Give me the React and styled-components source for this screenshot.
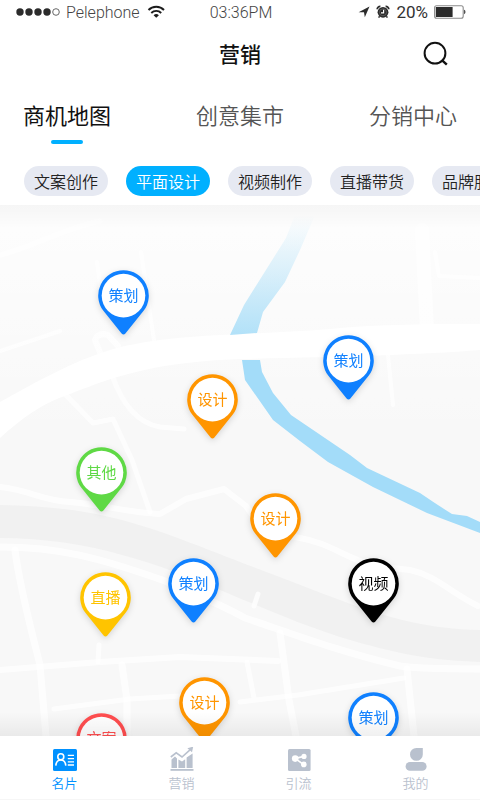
import React, { useState } from "react";
import styled, { createGlobalStyle } from "styled-components";

const GlobalStyle = createGlobalStyle`
  * {
    box-sizing: border-box;
  }

  body {
    margin: 0;
    background: #ffffff;
    font-family: "Noto Sans CJK SC", "Noto Sans", sans-serif;
    color: #222222;
  }

  button {
    border: none;
    padding: 0;
    background: none;
    font-family: inherit;
    color: inherit;
    cursor: pointer;
  }
`;

const Page = styled.div`
  display: flex;
  flex-direction: column;
  height: 100vh;
  overflow: hidden;
`;

// Top area
const Header = styled.header`
  background: #ffffff;
  padding-bottom: 9px;
`;

const StatusBar = styled.div`
  display: grid;
  grid-template-columns: 1fr auto 1fr;
  align-items: center;
  height: 24px;
  padding: 0 14px 0 16px;
  font-family: Roboto, sans-serif;
  font-size: 16px;
  font-weight: 300;
  color: #444444;
`;

const StatusGroup = styled.div`
  display: flex;
  align-items: center;
  justify-content: ${(props) => (props.$end ? "flex-end" : "flex-start")};
  gap: ${(props) => (props.$end ? "6px" : "5px")};
`;

const Battery = styled.span`
  font-size: 17px;
  font-weight: 400;
  color: #333333;
`;

const TitleBar = styled.div`
  display: grid;
  grid-template-columns: 1fr auto 1fr;
  align-items: center;
  height: 60px;
  padding: 0 31px;
`;

const Title = styled.h1`
  grid-column: 2;
  margin: 0 0 2px;
  font-size: 21px;
  line-height: 32px;
  font-weight: 500;
  color: #111111;
`;

const SearchButton = styled.button`
  justify-self: end;
  display: flex;
`;

const Tabs = styled.nav`
  display: flex;
  justify-content: space-between;
  padding: 14px 23px 22px;
`;

const Tab = styled.button`
  display: flex;
  flex-direction: column;
  align-items: center;
  gap: 10px;
  font-size: 22px;
  line-height: 32px;
  font-weight: ${(props) => (props.$active ? 400 : 350)};
  color: ${(props) => (props.$active ? "#111111" : "#555555")};

  &:after {
    content: "";
    width: 32px;
    height: 4px;
    border-radius: 2px;
    background: ${(props) => (props.$active ? "#00b0ff" : "transparent")};
  }
`;

const Chips = styled.div`
  display: flex;
  gap: 18px;
  padding: 0 24px;
  overflow: hidden;
`;

const Chip = styled.button`
  flex: none;
  height: 30px;
  border-radius: 15px;
  font-size: 16px;
  line-height: 30px;
  font-weight: 350;

  && {
    padding: 0 10px;
    background: ${(props) => (props.$active ? "#00b0ff" : "#e6e9f2")};
    color: ${(props) => (props.$active ? "#ffffff" : "#222222")};
  }
`;

// Map
const Map = styled.main`
  position: relative;
  flex: 1;
  min-height: 0;
  overflow: hidden;
  background: #f9f9f9;
`;

const MapArt = styled.svg`
  display: block;
  width: 100%;
  height: 100%;
`;

const Shade = styled.div`
  position: absolute;
  left: 0;
  right: 0;
  height: 24px;
  pointer-events: none;
  ${(props) =>
    props.$bottom
      ? "bottom: 0; background: linear-gradient(0deg, rgba(0, 0, 0, 0.06), rgba(0, 0, 0, 0));"
      : "top: 0; background: linear-gradient(180deg, rgba(0, 0, 0, 0.03), rgba(0, 0, 0, 0));"}
`;

const Pin = styled.button`
  position: absolute;
  left: ${(props) => props.$x}px;
  top: ${(props) => props.$y}px;
  width: 51px;
  height: 66px;
  filter: drop-shadow(0 2px 3px rgba(0, 0, 0, 0.14));

  svg {
    display: block;
  }
`;

const PinLabel = styled.span`
  position: absolute;
  top: 14px;
  left: 0;
  width: 100%;
  text-align: center;
  font-size: 15px;
  line-height: 22px;
  font-weight: 400;
  color: ${(props) => props.$color};
`;

// Bottom navigation
const BottomNav = styled.nav`
  display: flex;
  height: 64px;
  padding: 0 6px;
  background: #ffffff;
  border-bottom: 1px solid #f6f6f6;
`;

const NavItem = styled.a`
  flex: 1;
  display: flex;
  flex-direction: column;
  align-items: center;
  padding-top: 11px;
  font-size: 13px;
  line-height: 20px;
  font-weight: 350;
  text-decoration: none;
  color: ${(props) => (props.$active ? "#0091ff" : "#b9c1ce")};
`;

const tabs = ["商机地图", "创意集市", "分销中心"];

const chips = ["文案创作", "平面设计", "视频制作", "直播带货", "品牌服务"];

const colors = {
  策划: "#0f80ff",
  设计: "#ff9500",
  其他: "#5fd945",
  直播: "#ffc400",
  视频: "#000000",
  文案: "#ff4d4f",
};

const pins = [
  { type: "策划", x: 98, y: 65 },
  { type: "策划", x: 323, y: 130 },
  { type: "设计", x: 187, y: 169 },
  { type: "其他", x: 76, y: 242 },
  { type: "设计", x: 250, y: 288 },
  { type: "直播", x: 80, y: 367 },
  { type: "策划", x: 168, y: 353 },
  { type: "视频", x: 348, y: 353 },
  { type: "设计", x: 179, y: 472 },
  { type: "文案", x: 76, y: 508 },
  { type: "策划", x: 348, y: 487 },
];

function SignalDots() {
  return (
    <svg width="45" height="10" viewBox="0 0 45 10">
      {[4, 13, 22, 31].map((x) => (
        <circle key={x} cx={x} cy="5" r="3.7" fill="#2b2b2b" />
      ))}
      <circle cx="40" cy="5" r="3.3" fill="none" stroke="#555" strokeWidth="0.9" />
    </svg>
  );
}

function WifiIcon() {
  return (
    <svg width="22" height="14" viewBox="-3 0 22 14" fill="none" stroke="#1c1c1c" strokeWidth="1.9">
      <path d="M0.5 5C4.5 0.7 12 0.7 16 5" />
      <path d="M3.3 8C6 5.2 10.5 5.2 13.2 8" />
      <path d="M5.6 10.2C7.4 8.6 9.1 8.6 10.9 10.2L8.25 12.8Z" fill="#1c1c1c" stroke="none" />
    </svg>
  );
}

function LocationIcon() {
  return (
    <svg width="12" height="12" viewBox="0 0 12 12">
      <path d="M11.5 0.5L6.8 11.3L6 6.2L0.6 6.2Z" fill="#2b2b2b" />
    </svg>
  );
}

function AlarmIcon() {
  return (
    <svg width="14" height="14" viewBox="0 0 14 14">
      <circle cx="7" cy="7.3" r="5.4" fill="#2b2b2b" />
      <path d="M1.2 4.2A3 3 0 0 1 4.4 1.4M12.8 4.2A3 3 0 0 0 9.6 1.4" stroke="#2b2b2b" strokeWidth="1.8" fill="none" />
      <path d="M3.6 11.3L2.6 12.6M10.4 11.3L11.4 12.6" stroke="#2b2b2b" strokeWidth="1.5" />
      <circle cx="7" cy="7.3" r="3.5" fill="none" stroke="#777" strokeWidth="0.6" />
      <path d="M7.6 4.8V7.8H5" stroke="#fff" strokeWidth="1.2" fill="none" />
    </svg>
  );
}

function BatteryIcon() {
  return (
    <svg width="32" height="14" viewBox="0 0 32 14">
      <rect x="0.6" y="0.8" width="28.6" height="12.4" rx="2" fill="#fff" stroke="#8a8a8a" strokeWidth="1.1" />
      <rect x="1.8" y="2" width="16.8" height="10" fill="#2b2b2b" />
      <path d="M30.2 4.8C31.8 5.4 31.8 8.6 30.2 9.2Z" fill="#2b2b2b" />
    </svg>
  );
}

function SearchIcon() {
  return (
    <svg width="26" height="26" viewBox="0 0 26 26" fill="none" stroke="#111" strokeWidth="2">
      <circle cx="12" cy="12.2" r="10.4" />
      <path d="M18.6 18.8L23.8 23.6" strokeWidth="2.4" />
    </svg>
  );
}

function PinShape({ color }) {
  return (
    <svg width="51" height="66" viewBox="0 0 51 66">
      <path
        d="M25.5 0.2A25.3 25.3 0 0 0 5.2 40.6L23.6 63.6Q25.5 65.4 27.4 63.6L45.8 40.6A25.3 25.3 0 0 0 25.5 0.2Z"
        fill={color}
      />
      <circle cx="25.5" cy="25.6" r="21.8" fill="#fff" />
    </svg>
  );
}

function MapBackground() {
  return (
    <MapArt viewBox="0 205 480 531" preserveAspectRatio="xMidYMid slice" aria-hidden="true">
      <defs>
        <linearGradient id="river" gradientUnits="userSpaceOnUse" x1="0" y1="215" x2="0" y2="335">
          <stop offset="0" stopColor="#a0dbf8" stopOpacity="0" />
          <stop offset="0.45" stopColor="#a0dbf8" stopOpacity="0.35" />
          <stop offset="1" stopColor="#a0dbf8" stopOpacity="0.8" />
        </linearGradient>
        <linearGradient id="haze" gradientUnits="userSpaceOnUse" x1="0" y1="205" x2="0" y2="440">
          <stop offset="0" stopColor="#fff" stopOpacity="0.8" />
          <stop offset="1" stopColor="#fff" stopOpacity="0" />
        </linearGradient>
      </defs>
      <rect x="0" y="205" width="480" height="531" fill="#f8f8f8" />

      {/* railway band */}
      <path
        d="M0 505C60 506 110 512 183 540C215 552 260 570 340 600C390 619 430 629 480 630V662C430 660 400 655 340 637C300 624 270 611 220 590C160 565 90 538 0 538Z"
        fill="#f1f1f1"
      />

      {/* small streets */}
      <g fill="none" stroke="#fff" strokeOpacity="0.75" strokeLinecap="round" strokeLinejoin="round">
        <path strokeWidth="5" d="M0 255C30 248 60 230 100 221" />
        <path strokeWidth="4" d="M97 262L102 300M141 252L154 340M0 351L60 331" />
        <path strokeWidth="6" d="M101 355L95 340Q98 332 108 335L118 346" />
        <path strokeWidth="5" d="M66 395L93 423L113 419L132 460L150 512" />
        <path strokeWidth="5" d="M112 375C122 404 137 423 160 427L184 429" />
        <path strokeWidth="14" d="M422 230L427 330" />
        <path strokeWidth="4" d="M435 252L439 276L480 278M388 355L393 405" />
        <path
          strokeWidth="6"
          d="M0 487C30 490 40 500 70 502C100 504 130 513 160 514L186 499L224 489L246 506C260 530 280 535 300 538C330 543 345 558 375 566L410 570C435 575 450 592 478 606"
        />
        <path
          strokeWidth="7"
          d="M0 547C60 547 100 558 165 581C200 596 220 604 245 618C290 633 340 652 400 666C430 670 450 668 480 669"
        />
        <path strokeWidth="7" d="M15 550C20 590 34 640 40 665L46 736" />
        <path strokeWidth="6" d="M0 670L100 662L180 657L278 661" />
        <path strokeWidth="5" d="M99 645L98 662M54 709L130 699L180 696" />
        <path strokeWidth="7" d="M122 665L127 700V736" />
        <path strokeWidth="7" d="M280 633L289 700L296 736M407 669L414 736" />
        <path strokeWidth="5" d="M247 662L254 698M240 702L298 695L404 678M258 594L254 606" />
      </g>

      {/* main road */}
      <path
        d="M0 402C35 383 70 362 110 350C170 333 240 336 330 329C380 324 430 324 480 324V350C420 355 330 357 240 359C160 362 120 374 70 394C40 404 20 420 0 438Z"
        fill="#fff"
      />
      <rect x="0" y="205" width="480" height="235" fill="url(#haze)" />

      {/* river */}
      <path d="M295 215L286 238L244 305L230 335L257 333L263 312L285 282L300 250L315 215Z" fill="url(#river)" />
      <path
        d="M242 360H260L262 372L273 393L291 415L350 455L367 468L420 493Q436 504 452 514L467 516L480 522V533L427 513L373 487L328 462L300 441L273 420L245 380Z"
        fill="#a3dcf9"
      />
    </MapArt>
  );
}

function CardIcon() {
  return (
    <svg width="26" height="26" viewBox="0 0 26 26">
      <rect x="1" y="2" width="24" height="22" rx="1.5" fill="#0091ff" />
      <g fill="none" stroke="#fff" strokeWidth="1.6">
        <circle cx="8.8" cy="9.8" r="3" />
        <path d="M3.8 18.6C4.2 14.6 6 13 8.8 13S13.4 14.6 13.8 18.6" />
        <path d="M15.8 8.4H22M15.8 11.6H22M15.8 14.8H22M15.8 18H22" strokeWidth="1.3" />
      </g>
    </svg>
  );
}

function ChartIcon() {
  return (
    <svg width="26" height="26" viewBox="0 0 26 26" fill="#b9c1ce">
      <path d="M2.5 12.6L6 9.6L8 11.4V21H2.5ZM9.4 12.6L13 14.6L16.2 12.2V21H9.4ZM17.6 10.6L23.6 6.4V21H17.6Z" />
      <rect x="1.5" y="22" width="23" height="1.8" />
      <path d="M1.8 10L7.2 5.8L13 10L21 2.8" fill="none" stroke="#b9c1ce" strokeWidth="1.6" />
      <path d="M24.2 -0.4L23 5.2L18.4 1.2Z" />
    </svg>
  );
}

function ShareIcon() {
  return (
    <svg width="26" height="26" viewBox="0 0 26 26">
      <rect x="2" y="2" width="22.6" height="22" rx="1.5" fill="#b9c1ce" />
      <path d="M18 9.4L9.2 11.4L17.6 17.6" fill="none" stroke="#fff" strokeWidth="1.6" />
      <circle cx="9.2" cy="11.6" r="3.3" fill="#fff" />
      <circle cx="18" cy="9.4" r="2.6" fill="#fff" />
      <circle cx="17.8" cy="17.4" r="2.8" fill="#fff" />
    </svg>
  );
}

function UserIcon() {
  return (
    <svg width="26" height="26" viewBox="0 0 26 26" fill="#b9c1ce">
      <path d="M19.8 1V7.4A6.4 6.4 0 1 1 13.4 1Z" />
      <rect x="2.6" y="15" width="21" height="8.8" rx="4.4" />
    </svg>
  );
}

const navItems = [
  { label: "名片", icon: <CardIcon /> },
  { label: "营销", icon: <ChartIcon /> },
  { label: "引流", icon: <ShareIcon /> },
  { label: "我的", icon: <UserIcon /> },
];

export default function App() {
  const [activeTab, setActiveTab] = useState(0);
  const [activeChip, setActiveChip] = useState(1);
  const [activeNav, setActiveNav] = useState(0);

  return (
    <Page>
      <GlobalStyle />
      <Header>
        <StatusBar>
          <StatusGroup>
            <SignalDots />
            <span>Pelephone</span>
            <WifiIcon />
          </StatusGroup>
          <span>03:36PM</span>
          <StatusGroup $end>
            <LocationIcon />
            <AlarmIcon />
            <Battery>20%</Battery>
            <BatteryIcon />
          </StatusGroup>
        </StatusBar>

        <TitleBar>
          <Title>营销</Title>
          <SearchButton aria-label="搜索">
            <SearchIcon />
          </SearchButton>
        </TitleBar>

        <Tabs>
          {tabs.map((tab, i) => (
            <Tab key={tab} $active={i === activeTab} onClick={() => setActiveTab(i)}>
              {tab}
            </Tab>
          ))}
        </Tabs>

        <Chips>
          {chips.map((chip, i) => (
            <Chip key={chip} $active={i === activeChip} onClick={() => setActiveChip(i)}>
              {chip}
            </Chip>
          ))}
        </Chips>
      </Header>

      <Map>
        <MapBackground />
        <Shade />
        {pins.map((pin) => (
          <Pin key={`${pin.x}-${pin.y}`} $x={pin.x} $y={pin.y}>
            <PinShape color={colors[pin.type]} />
            <PinLabel $color={colors[pin.type]}>{pin.type}</PinLabel>
          </Pin>
        ))}
        <Shade $bottom />
      </Map>

      <BottomNav>
        {navItems.map((item, i) => (
          <NavItem key={item.label} href="#" $active={i === activeNav} onClick={() => setActiveNav(i)}>
            {item.icon}
            {item.label}
          </NavItem>
        ))}
      </BottomNav>
    </Page>
  );
}
